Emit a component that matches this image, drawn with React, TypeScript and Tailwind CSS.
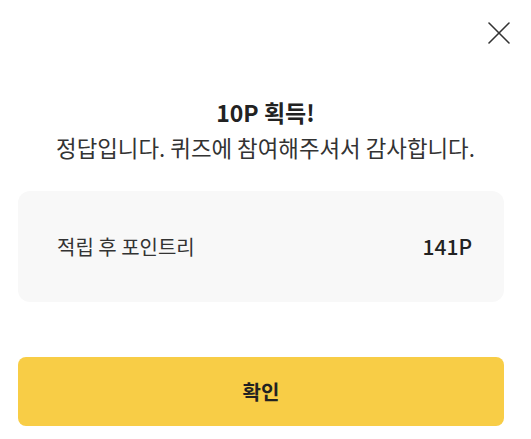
import { X } from 'lucide-react'

export default function App() {
  return (
    <div className="w-[531px] h-[439px] bg-white font-['Noto_Sans_CJK_KR','Noto_Sans',sans-serif] text-[#222]">
      <div className="flex justify-end pt-[13px] pr-[12px]">
        <button className="text-[#333]">
          <X className="size-[40px]" strokeWidth={0.95} />
        </button>
      </div>

      <div className="mt-[42px] flex flex-col items-center">
        <h1 className="text-[23px] font-semibold leading-[35px]">10P 획득!</h1>
        <p className="text-[22.4px] leading-[35px] text-[#333]">정답입니다. 퀴즈에 참여해주셔서 감사합니다.</p>
      </div>

      <div className="ml-[18px] mt-[26px] w-[486px] h-[111px] rounded-[12px] bg-[#f8f8f8] flex items-center justify-between pl-[39px] pr-[32px]">
        <span className="text-[20px] text-[#333]">적립 후 포인트리</span>
        <span className="text-[21px] font-medium">141P</span>
      </div>

      <button className="ml-[18px] mt-[55px] w-[486px] h-[69px] rounded-[8px] bg-[#f8cd46] text-[20px] font-bold text-[#222]">
        확인
      </button>
    </div>
  )
}
